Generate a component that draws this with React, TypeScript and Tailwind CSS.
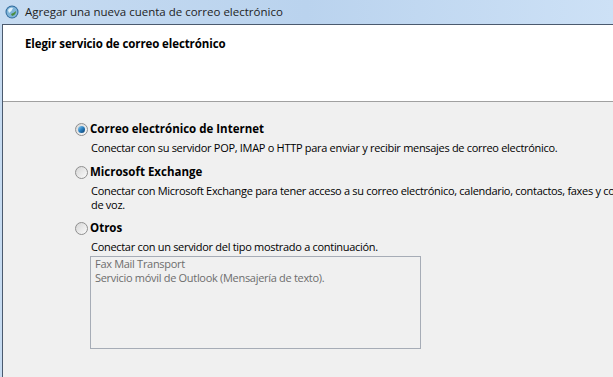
import React from 'react';

const font = { fontFamily: '"Segoe UI", "Open Sans", "Noto Sans", sans-serif' };

const Radio = ({ checked }: { checked?: boolean }) => (
  <span className="relative inline-flex h-[13px] w-[13px] shrink-0 items-center justify-center rounded-full border border-[#8f8f8f] bg-gradient-to-br from-[#d6d6d6] to-[#fbfbfb]">
    {checked && (
      <span className="h-[7px] w-[7px] rounded-full bg-gradient-to-br from-[#8fd0f2] via-[#2a7fbf] to-[#0d3f6e]" />
    )}
  </span>
);

const options = [
  {
    title: 'Correo electrónico de Internet',
    lines: ['Conectar con su servidor POP, IMAP o HTTP para enviar y recibir mensajes de correo electrónico.'],
    checked: true,
    gap: 'mb-[7px]',
  },
  {
    title: 'Microsoft Exchange',
    lines: [
      'Conectar con Microsoft Exchange para tener acceso a su correo electrónico, calendario, contactos, faxes y correo',
      'de voz.',
    ],
    gap: 'mb-[6px]',
  },
  {
    title: 'Otros',
    lines: ['Conectar con un servidor del tipo mostrado a continuación.'],
    gap: '',
  },
];

export default function App() {
  return (
    <div className="h-[377px] w-[613px] overflow-hidden bg-gradient-to-r from-[#c6dbf1] via-[#bad3ee] to-[#cde1f6] text-[12px] text-black" style={font}>
      {/* title bar */}
      <div className="flex h-[24px] items-center gap-[6px] pl-[5px]">
        <svg width="14" height="14" viewBox="0 0 14 14">
          <circle cx="7" cy="7" r="6.5" fill="#2f6a9c" />
          <circle cx="7" cy="7" r="5.5" fill="#7fb4d8" />
          <path d="M3 5 Q5 2 8 3 Q7 6 4 8 Z" fill="#dff0fa" />
          <path d="M6 9 Q9 8 11 6 Q11 10 7 11 Z" fill="#4a8c3c" />
        </svg>
        <span className="text-[11.5px] text-[#1e1e1e]">Agregar una nueva cuenta de correo electrónico</span>
      </div>

      {/* client area */}
      <div className="ml-[2px] h-full border-l border-t border-[#4b5a6e] bg-[#f0f0f0]">
        <div className="h-[77px] border-b border-[#a0a0a0] bg-white pl-[22px] pt-[10px]">
          <div className="text-[11.5px] font-bold tracking-[-0.1px]">Elegir servicio de correo electrónico</div>
        </div>

        <div className="flex flex-col pl-[72px] pt-[17px]">
          {options.map((o, i) => (
            <div key={o.title} className={`flex flex-col ${o.gap}`}>
              <div className="flex h-[20px] items-center gap-[2px]">
                <Radio checked={o.checked} />
                <span className="text-[11.5px] font-bold">{o.title}</span>
              </div>
              <div className="mt-[2px] pl-[16px] text-[11px] leading-[14px] tracking-[-0.3px] whitespace-nowrap">
                {o.lines.map(l => (
                  <div key={l}>{l}</div>
                ))}
              </div>
              {i === 2 && (
                <div className="ml-[15px] mt-[2px] h-[93px] w-[331px] border border-[#a6acb6] bg-[#f0f0f0] px-[4px] text-[11px] leading-[14px] tracking-[-0.3px] text-[#6d6d6d]">
                  <div>Fax Mail Transport</div>
                  <div>Servicio móvil de Outlook (Mensajería de texto).</div>
                </div>
              )}
            </div>
          ))}
        </div>
      </div>
    </div>
  );
}
